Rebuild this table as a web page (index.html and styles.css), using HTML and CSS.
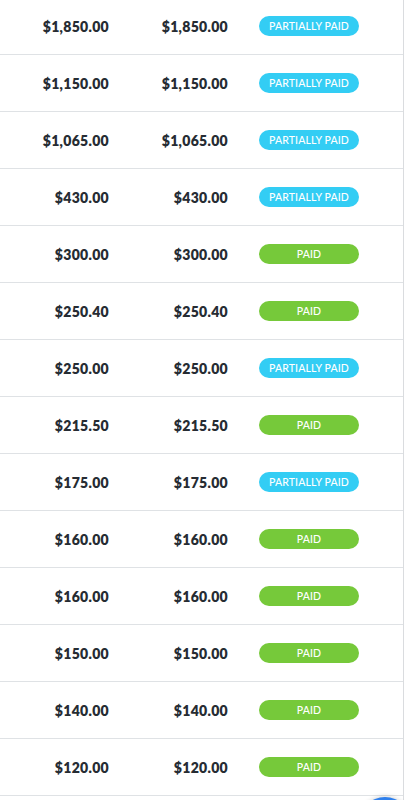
FILE: index.html
```html
<!DOCTYPE html>
<html>
<head>
<meta charset="utf-8">
<link rel="stylesheet" href="styles.css">
</head>
<body>
<div class="panel">
  <div class="table">
    <div class="row"><span class="amt">$1,850.00</span><span class="amt">$1,850.00</span><span class="badge partial">PARTIALLY PAID</span></div>
    <div class="row"><span class="amt">$1,150.00</span><span class="amt">$1,150.00</span><span class="badge partial">PARTIALLY PAID</span></div>
    <div class="row"><span class="amt">$1,065.00</span><span class="amt">$1,065.00</span><span class="badge partial">PARTIALLY PAID</span></div>
    <div class="row"><span class="amt">$430.00</span><span class="amt">$430.00</span><span class="badge partial">PARTIALLY PAID</span></div>
    <div class="row"><span class="amt">$300.00</span><span class="amt">$300.00</span><span class="badge paid">PAID</span></div>
    <div class="row"><span class="amt">$250.40</span><span class="amt">$250.40</span><span class="badge paid">PAID</span></div>
    <div class="row"><span class="amt">$250.00</span><span class="amt">$250.00</span><span class="badge partial">PARTIALLY PAID</span></div>
    <div class="row"><span class="amt">$215.50</span><span class="amt">$215.50</span><span class="badge paid">PAID</span></div>
    <div class="row"><span class="amt">$175.00</span><span class="amt">$175.00</span><span class="badge partial">PARTIALLY PAID</span></div>
    <div class="row"><span class="amt">$160.00</span><span class="amt">$160.00</span><span class="badge paid">PAID</span></div>
    <div class="row"><span class="amt">$160.00</span><span class="amt">$160.00</span><span class="badge paid">PAID</span></div>
    <div class="row"><span class="amt">$150.00</span><span class="amt">$150.00</span><span class="badge paid">PAID</span></div>
    <div class="row"><span class="amt">$140.00</span><span class="amt">$140.00</span><span class="badge paid">PAID</span></div>
    <div class="row"><span class="amt">$120.00</span><span class="amt">$120.00</span><span class="badge paid">PAID</span></div>
  </div>
  <div class="fab"></div>
</div>
</body>
</html>
```

FILE: styles.css
```css
html, body {
  margin: 0;
  padding: 0;
  background: #ffffff;
  overflow: hidden;
}
.panel {
  position: relative;
  width: 406px;
  height: 800px;
  overflow: hidden;
  display: flex;
}
.table {
  width: 403px;
  margin-top: -2px;
  border-right: 1px solid #dadcdf;
  display: flex;
  flex-direction: column;
}
.row {
  flex: 0 0 56px;
  display: grid;
  grid-template-columns: 109px 119px 100px;
  align-items: center;
  border-bottom: 1px solid #dfe2e5;
  font-family: "Lato", "Liberation Sans", sans-serif;
}
.amt {
  text-align: right;
  font-weight: 800;
  font-size: 14px;
  color: #262c33;
  letter-spacing: 0.3px;
}
.badge {
  margin-left: 31px;
  width: 100px;
  height: 20px;
  border-radius: 10px;
  color: #ffffff;
  font-size: 10.5px;
  font-weight: 500;
  line-height: 20px;
  text-align: center;
  letter-spacing: 0.1px;
}
.partial { background: #33cdf4; }
.paid { background: #76c93a; }
.fab {
  position: absolute;
  left: 359px;
  top: 797px;
  width: 52px;
  height: 52px;
  border-radius: 50%;
  background: #2f80ed;
  box-shadow: 0 -1px 4px rgba(0,0,0,0.15);
}
```
